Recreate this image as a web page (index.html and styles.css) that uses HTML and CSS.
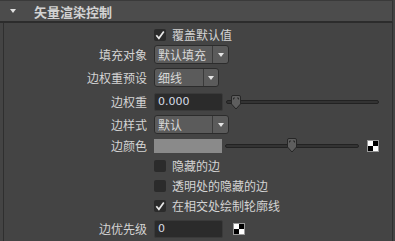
FILE: index.html
```html
<!DOCTYPE html>
<html lang="zh">
<head>
  <meta charset="UTF-8" />
  <title>矢量渲染控制</title>
  <link rel="stylesheet" href="styles.css">
</head>
<body>
  <div class="panel">
    <div class="panel-head">
      <span class="caret"></span>
      <span class="title">矢量渲染控制</span>
    </div>
    <div class="panel-body">
      <div class="row r-override">
        <span class="label"></span>
        <div class="check">
          <span class="box"><svg width="12" height="12" viewBox="0 0 12 12"><path d="M2.3 6.2 L4.9 9.3 L9.8 2.4" fill="none" stroke="#e8e8e8" stroke-width="1.7"/></svg></span>
          <span>覆盖默认值</span>
        </div>
      </div>
      <div class="row r-fill">
        <span class="label">填充对象</span>
        <div class="select"><span class="value">默认填充</span><span class="arrow"></span></div>
      </div>
      <div class="row r-preset">
        <span class="label">边权重预设</span>
        <div class="select narrow"><span class="value">细线</span><span class="arrow"></span></div>
      </div>
      <div class="row r-weight">
        <span class="label">边权重</span>
        <div class="field">0.000</div>
        <div class="slider long">
          <div class="track"></div>
          <svg class="thumb" style="left: 4px" width="12" height="15" viewBox="0 0 12 15"><path d="M1.5 2 Q1.5 0.5 3 0.5 H9 Q10.5 0.5 10.5 2 V9 L6 14 L1.5 9 Z" fill="#5e5e5e" stroke="#262626"/><path d="M3.5 3 V4.5 M3.5 3 H5 M8.5 3 V4.5 M8.5 3 H7" stroke="#2a2a2a" fill="none"/></svg>
        </div>
      </div>
      <div class="row r-style">
        <span class="label">边样式</span>
        <div class="select"><span class="value">默认</span><span class="arrow"></span></div>
      </div>
      <div class="row r-color">
        <span class="label">边颜色</span>
        <div class="swatch"></div>
        <div class="slider short">
          <div class="track"></div>
          <svg class="thumb" style="left: 61px" width="12" height="15" viewBox="0 0 12 15"><path d="M1.5 2 Q1.5 0.5 3 0.5 H9 Q10.5 0.5 10.5 2 V9 L6 14 L1.5 9 Z" fill="#5e5e5e" stroke="#262626"/><path d="M3.5 3 V4.5 M3.5 3 H5 M8.5 3 V4.5 M8.5 3 H7" stroke="#2a2a2a" fill="none"/></svg>
        </div>
        <span class="checker"></span>
      </div>
      <div class="row r-hidden">
        <span class="label"></span>
        <div class="check"><span class="box"></span><span>隐藏的边</span></div>
      </div>
      <div class="row r-transp">
        <span class="label"></span>
        <div class="check"><span class="box"></span><span>透明处的隐藏的边</span></div>
      </div>
      <div class="row r-outline">
        <span class="label"></span>
        <div class="check">
          <span class="box"><svg width="12" height="12" viewBox="0 0 12 12"><path d="M2.3 6.2 L4.9 9.3 L9.8 2.4" fill="none" stroke="#e8e8e8" stroke-width="1.7"/></svg></span>
          <span>在相交处绘制轮廓线</span>
        </div>
      </div>
      <div class="row r-priority">
        <span class="label">边优先级</span>
        <div class="field">0</div>
        <span class="checker gap"></span>
      </div>
    </div>
  </div>
</body>
</html>
```

FILE: styles.css
```css
* { box-sizing: border-box; }
html, body {
  margin: 0;
  padding: 0;
  background: #444;
  width: 395px;
  height: 241px;
  overflow: hidden;
  font-family: "Noto Sans CJK SC", "Liberation Sans", sans-serif;
  font-size: 12px;
  color: #d4d4d4;
}
.panel {
  width: 393px;
}
.panel-head {
  height: 23px;
  background: #4c4c4c;
  border-top: 1px solid #3a3a3a;
  border-right: 1px solid #333;
  border-bottom: 2px solid #2c2c2c;
  display: flex;
  align-items: center;
  padding-top: 1px;
}
.caret {
  width: 0;
  height: 0;
  margin-left: 10px;
  margin-top: -2px;
  border-left: 3.5px solid transparent;
  border-right: 3.5px solid transparent;
  border-top: 4px solid #e0e0e0;
}
.title {
  margin-left: 18px;
  font-size: 13px;
  font-weight: bold;
  color: #d2d2d2;
  line-height: 16px;
}
.panel-body {
  margin-left: 3px;
  width: 390px;
  height: 218px;
  background: #444;
  border-left: 1px solid #2f2f2f;
  border-right: 1px solid #2f2f2f;
  padding-top: 1px;
}
.row {
  display: flex;
  align-items: center;
}
.r-override { height: 21px; }
.r-fill { height: 19px; }
.r-preset { height: 27px; }
.r-weight { height: 22px; }
.r-style { height: 23px; }
.r-color { height: 19px; }
.r-hidden { height: 21px; }
.r-transp { height: 19px; }
.r-outline { height: 22px; }
.r-priority { height: 23px; }
.label {
  width: 143px;
  flex-shrink: 0;
  margin-right: 7px;
  text-align: right;
  line-height: 14px;
}
.check {
  display: flex;
  align-items: center;
  gap: 6px;
  line-height: 14px;
}
.box {
  width: 12px;
  height: 12px;
  border-radius: 2px;
  background: #2b2b2b;
  display: block;
}
.box svg { display: block; }
.select {
  width: 75px;
  height: 19px;
  background: #5b5b5b;
  border: 1px solid #2c2c2c;
  border-radius: 3px;
  display: flex;
  flex-shrink: 0;
}
.select.narrow { width: 65px; }
.select .value {
  flex: 1;
  padding-left: 3px;
  line-height: 17px;
  color: #d8d8d8;
}
.select .arrow {
  width: 16px;
  border-left: 1px solid #3a3a3a;
  display: flex;
  align-items: center;
  justify-content: center;
}
.select.narrow .arrow { width: 15px; }
.select .arrow::after {
  content: "";
  border-left: 3.5px solid transparent;
  border-right: 3.5px solid transparent;
  border-top: 4px solid #e4e4e4;
}
.field {
  width: 69px;
  height: 18px;
  flex-shrink: 0;
  background: #2b2b2b;
  border: 1px solid #3a3a3a;
  border-radius: 2px;
  padding-left: 3px;
  line-height: 16px;
  font-family: "DejaVu Sans", sans-serif;
  font-size: 11px;
  color: #d6dde6;
}
.swatch {
  width: 68px;
  height: 14px;
  flex-shrink: 0;
  background: #8a8a8a;
}
.slider {
  position: relative;
  height: 15px;
  flex-shrink: 0;
  display: flex;
  align-items: center;
}
.slider.long { width: 153px; margin-left: 3px; }
.slider.short { width: 134px; margin-left: 3px; }
.track {
  width: 100%;
  height: 4px;
  background: #333;
  border: 1px solid #222;
  border-radius: 2px;
}
.thumb {
  position: absolute;
  top: 0;
}
.checker {
  width: 12px;
  height: 12px;
  flex-shrink: 0;
  margin-left: 8px;
  border: 1px solid #9a9a9a;
  background:
    linear-gradient(#fff, #fff) 0 0 / 5px 5px no-repeat,
    linear-gradient(#fff, #fff) 5px 5px / 5px 5px no-repeat,
    #000;
}
.checker.gap { margin-left: 10px; }
```
